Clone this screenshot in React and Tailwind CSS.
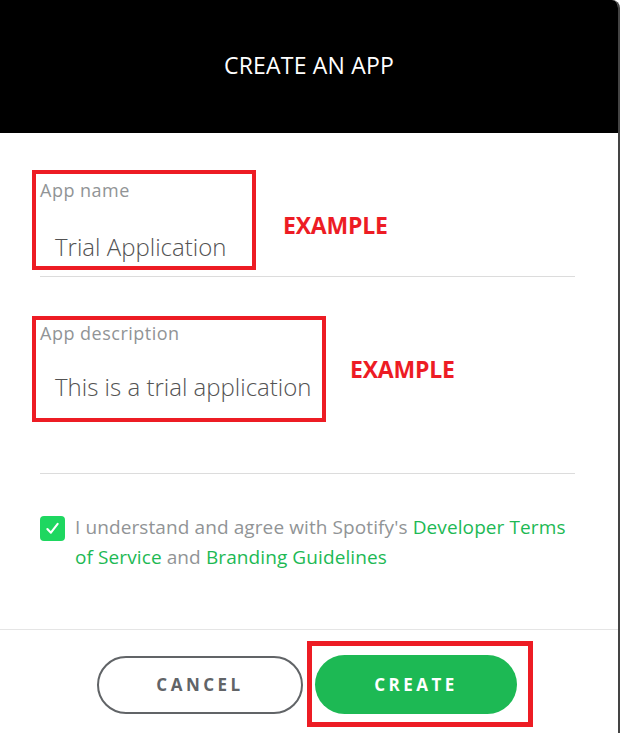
const font = { fontFamily: '"Open Sans", "Liberation Sans", sans-serif' };

function ExampleTag({ className }) {
  return (
    <span
      className={`text-[23px] font-bold text-[#ed1c24] tracking-[-0.2px] ${className}`}
      style={{ fontFamily: '"Open Sans", sans-serif' }}
    >
      EXAMPLE
    </span>
  );
}

function Field({ label, value, boxClass, tagClass }) {
  return (
    <div className="flex items-center pl-[32px]">
      <div className={`border-[4px] border-[#ed1c24] flex flex-col ${boxClass}`}>
        <span className="pl-[4px] text-[18px] leading-[22px] tracking-[0.5px] font-medium text-[#919496]">{label}</span>
        <span className="pl-[19px] text-[24px] leading-[30px] font-light text-[#535353] whitespace-nowrap">
          {value}
        </span>
      </div>
      <ExampleTag className={tagClass} />
    </div>
  );
}

export default function App() {
  return (
    <div
      className="w-[620px] h-[733px] bg-white border-r-2 border-[#444] rounded-tr-[8px] overflow-hidden flex flex-col"
      style={font}
    >
      {/* header */}
      <div className="h-[133px] bg-black flex items-center justify-center shrink-0">
        <h1 className="text-white text-[23px] tracking-[0.2px] -mt-[3px]">CREATE AN APP</h1>
      </div>

      {/* form */}
      <div className="pt-[37px]">
        <Field
          label="App name"
          value="Trial Application"
          boxClass="w-[224px] h-[100px] pt-[5px] gap-[31px]"
          tagClass="ml-[27px] mt-[10px]"
        />
        <div className="ml-[40px] mr-[43px] mt-[6px] border-t border-[#dcdcdc]" />

        <div className="pt-[39px]">
          <Field
            label="App description"
            value="This is a trial application"
            boxClass="w-[294px] h-[106px] pt-[2px] gap-[28px]"
            tagClass="ml-[24px] mt-[0px]"
          />
        </div>
        <div className="ml-[40px] mr-[43px] mt-[51px] border-t border-[#dcdcdc]" />

        {/* terms */}
        <div className="flex items-start pl-[40px] pt-[41px] gap-[10px]">
          <div className="w-[25px] h-[25px] rounded-[4px] bg-[#1ed760] flex items-center justify-center mt-[1px] shrink-0">
            <svg width="15" height="15" viewBox="0 0 16 16" fill="none">
              <path d="M2.5 8.5 L6.3 12.5 L13.5 3" stroke="white" strokeWidth="2.2" strokeLinecap="round" strokeLinejoin="round" />
            </svg>
          </div>
          <p className="text-[19px] leading-[30px] tracking-[0.1px] text-[#919496] -mt-[3px] whitespace-nowrap">
            I understand and agree with Spotify's{' '}
            <span className="text-[#1db954]">Developer Terms</span>
            <br />
            <span className="text-[#1db954]">of Service</span> and{' '}
            <span className="text-[#1db954]">Branding Guidelines</span>
          </p>
        </div>
      </div>

      {/* footer */}
      <div className="mt-auto border-t border-[#e5e5e5] h-[104px] flex items-start pl-[97px] gap-[4px]">
        <button className="w-[206px] h-[58px] mt-[26px] rounded-full border-2 border-[#616467] text-[#616467] text-[17px] font-bold tracking-[3.5px]">
          CANCEL
        </button>
        <div className="mt-[11px] border-[5px] border-[#ed1c24] pl-[3px] pr-[11px] pt-[9px] pb-[8px]">
          <button className="w-[202px] h-[59px] rounded-full bg-[#1db954] text-white text-[17px] font-bold tracking-[3.5px]">
            CREATE
          </button>
        </div>
      </div>
    </div>
  );
}
